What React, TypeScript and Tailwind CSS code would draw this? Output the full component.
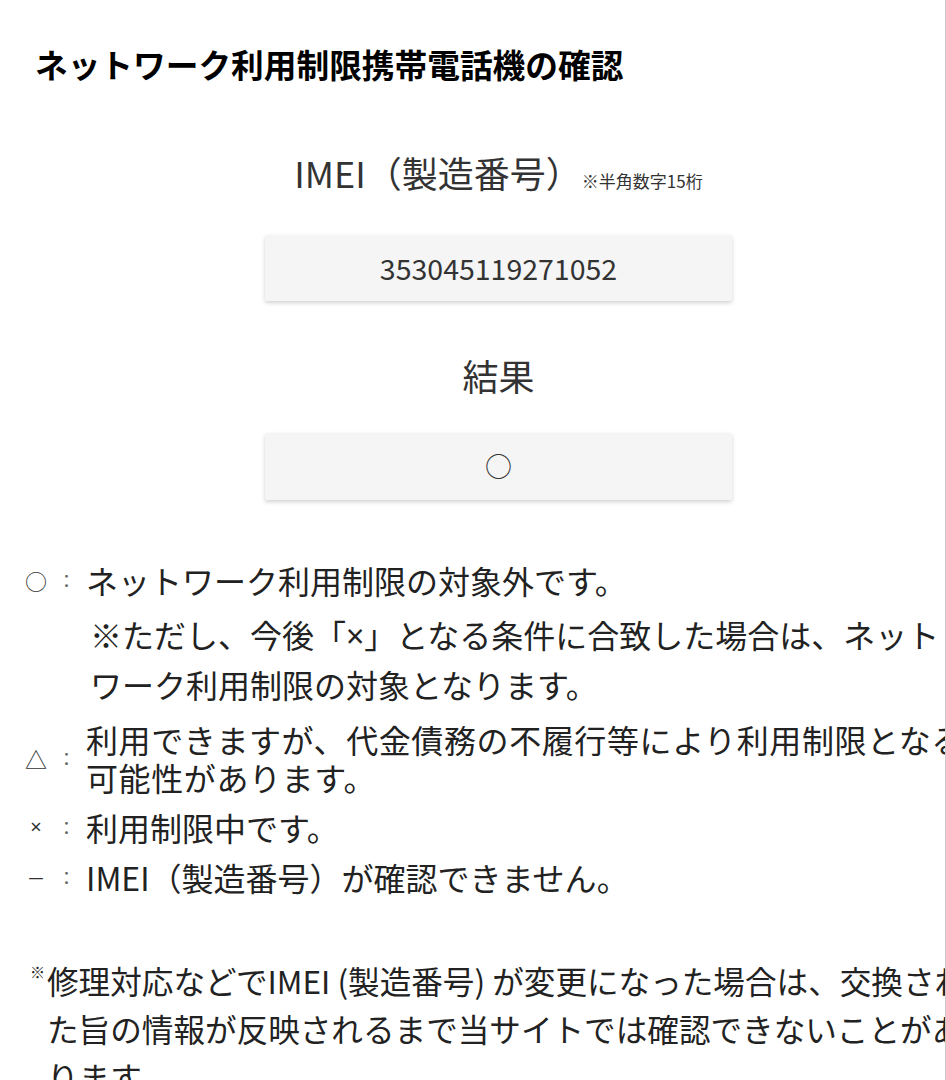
export default function App() {
  return (
    <div className="relative w-[946px] h-[1080px] overflow-hidden bg-white font-['Noto_Sans_CJK_JP','Noto_Sans',sans-serif]">
      <div className="w-[997px] whitespace-nowrap">
        {/* 見出し */}
        <h1 className="pt-[42px] pl-[35px] text-[32.7px] leading-[44px] font-bold text-black">
          ネットワーク利用制限携帯電話機の確認
        </h1>

        {/* IMEI */}
        <div className="mt-[62px] flex justify-center items-baseline text-[#333]">
          <span className="text-[36px] leading-[48px]">IMEI（製造番号）</span>
          <span className="text-[17px]">※半角数字15桁</span>
        </div>
        <div className="mx-auto mt-[39px] w-[467px] h-[66px] bg-[#f5f5f5] rounded-[2px] shadow-[0_2px_4px_rgba(0,0,0,0.18)] flex items-center justify-center text-[28.5px] text-[#333]">
          353045119271052
        </div>

        {/* 結果 */}
        <div className="mt-[50px] text-center text-[36px] leading-[48px] text-[#333]">結果</div>
        <div className="mx-auto mt-[34px] w-[467px] h-[67px] bg-[#f5f5f5] rounded-[2px] shadow-[0_2px_4px_rgba(0,0,0,0.18)] flex items-center justify-center text-[27px] text-[#333]">
          ○
        </div>

        {/* 凡例 */}
        <div className="mt-[61px] pl-[25px] flex flex-col gap-[12px] text-[32px] leading-[38px] text-[#222]">
          <div>
            <div className="flex items-center">
              <Marker mark="○" />
              <span>ネットワーク利用制限の対象外です。</span>
            </div>
            <div className="mt-[11px] pl-[65px] leading-[48px]">
              ※ただし、今後「<span className="font-['Noto_Sans',sans-serif]">×</span>」となる条件に合致した場合は、ネット
              <br />
              ワーク利用制限の対象となります。
            </div>
          </div>
          <div className="flex items-center">
            <Marker mark="△" />
            <span className="tracking-[0.6px]">
              利用できますが、代金債務の不履行等により利用制限となる
              <br />
              可能性があります。
            </span>
          </div>
          <div className="flex items-center">
            <Marker mark="×" latin />
            <span>利用制限中です。</span>
          </div>
          <div className="flex items-center">
            <Marker mark="—" latin small />
            <span>IMEI（製造番号）が確認できません。</span>
          </div>
        </div>

        {/* 注記 */}
        <div className="mt-[60px] pl-[30px] flex text-[31.6px] leading-[48px] text-[#222]">
          <span className="w-[17px] shrink-0 text-[15px] leading-none mt-[8px]">※</span>
          <p>
            修理対応などでIMEI (製造番号) が変更になった場合は、交換され
            <br />
            た旨の情報が反映されるまで当サイトでは確認できないことがあ
            <br />
            ります。
          </p>
        </div>
      </div>

      <div className="absolute top-0 right-0 w-px h-full bg-[#cccccc]" />
    </div>
  )
}

function Marker({ mark, latin = false, small = false }: { mark: string; latin?: boolean; small?: boolean }) {
  let cls = 'w-[22px] shrink-0 text-center text-[22px] text-[#333]'
  if (latin) cls = "w-[22px] shrink-0 text-center text-[20px] text-[#333] font-['Noto_Sans',sans-serif]"
  if (small) cls = "w-[22px] shrink-0 text-center text-[15px] text-[#333] font-['Noto_Sans',sans-serif]"
  return (
    <>
      <span className={cls}>{mark}</span>
      <span className="w-[39px] shrink-0 text-center text-[18px] text-[#666]">：</span>
    </>
  )
}
